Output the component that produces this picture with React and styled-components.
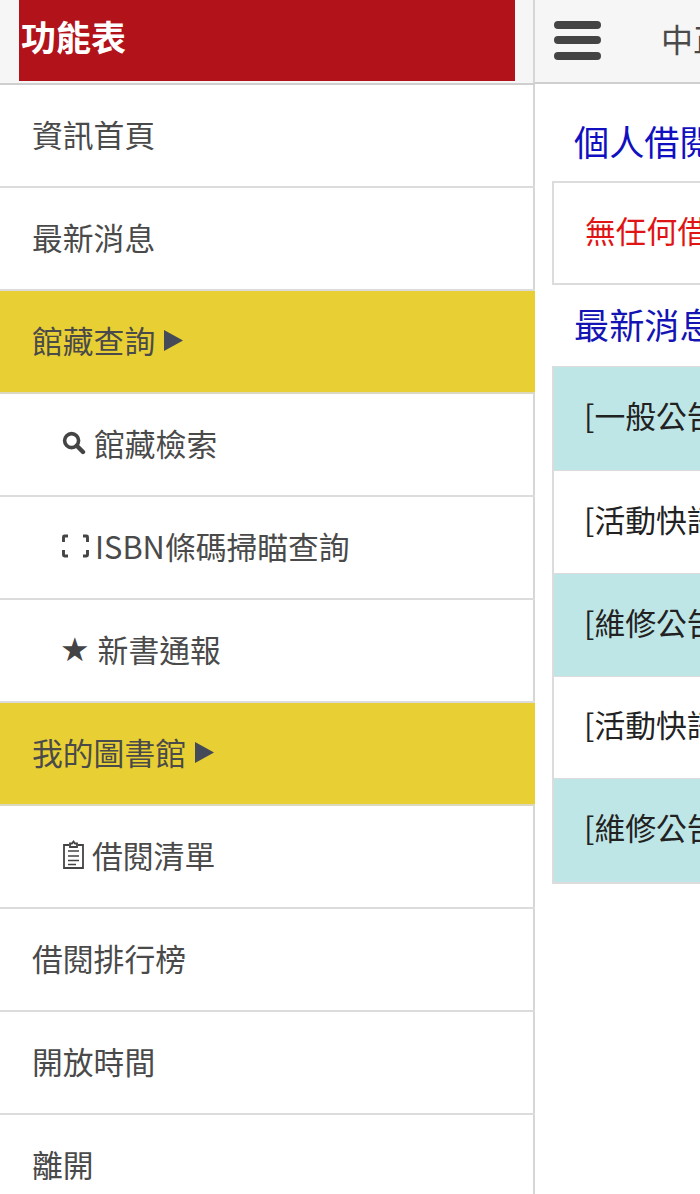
import React from "react";
import styled, { createGlobalStyle } from "styled-components";

const Global = createGlobalStyle`
  html, body { margin: 0; padding: 0; background: #fff; }
  * { box-sizing: border-box; }
`;

const FONT = `"Noto Sans CJK TC", "Noto Sans", "Liberation Sans", sans-serif`;

const Viewport = styled.div`
  display: flex;
  width: 700px;
  height: 1194px;
  overflow: hidden;
  font-family: ${FONT};
  background: #fff;
`;

const Sidebar = styled.nav`
  flex: 0 0 535px;
  height: 1194px;
  overflow: hidden;
  background: #fff;
`;

const SideHeader = styled.header`
  height: 85px;
  padding-left: 19px;
  background: #f6f6f6;
  border-bottom: 2px solid #cfcfcf;
  box-shadow: inset -2px 0 0 #d6d6d6;
`;

const SideTitle = styled.h1`
  display: flex;
  align-items: center;
  width: 496px;
  height: 81px;
  margin: 0;
  padding-left: 2px;
  padding-bottom: 10px;
  background: #b2121a;
  color: #fff;
  font-size: 35px;
  font-weight: 700;
  line-height: 1;
`;

const Row = styled.a`
  display: flex;
  align-items: center;
  gap: ${(p) => p.$gap ?? 7}px;
  height: 103px;
  padding-left: ${(p) => (p.$sub ? 62 : 32)}px;
  padding-bottom: 3px;
  border-bottom: 2px solid ${(p) => (p.$active ? "#dcd8c0" : "#dcdcdc")};
  background: ${(p) => (p.$active ? "#e8cf33" : "#fff")};
  box-shadow: ${(p) => (p.$active ? "none" : "inset -2px 0 0 #d6d6d6")};
  color: #4a4a4a;
  font-size: 30.8px;
  line-height: 1;
  white-space: nowrap;
`;

const StarGlyph = styled.span`
  margin-left: -2px;
  font-family: "DejaVu Sans", sans-serif;
  font-size: 33px;
  color: #444;
`;

const Main = styled.main`
  flex: 0 0 600px;
  height: 1194px;
`;

const TopBar = styled.header`
  display: flex;
  align-items: center;
  gap: 60px;
  height: 84px;
  padding: 0 0 2px 19px;
  background: #f6f6f6;
  border-bottom: 2px solid #cfcfcf;
`;

const Burger = styled.button`
  display: flex;
  flex-direction: column;
  gap: 7.5px;
  width: 47px;
  padding: 0;
  border: 0;
  background: none;
`;

const BurgerBar = styled.span`
  display: block;
  height: 8px;
  border-radius: 4px;
  background: #444;
`;

const TopTitle = styled.span`
  color: #4a4a4a;
  font-size: 32px;
  line-height: 1;
  white-space: nowrap;
  padding-bottom: 4px;
`;

const Content = styled.section`
  padding: 0 0 0 17px;
`;

const SectionTitle = styled.h2`
  height: ${(p) => p.$h}px;
  margin: 0;
  padding-left: 22px;
  padding-top: ${(p) => p.$top}px;
  color: ${(p) => (p.$news ? "#1414b4" : "#1010c0")};
  font-size: 35.2px;
  font-weight: 400;
  line-height: 1.2;
  white-space: nowrap;
`;

const Notice = styled.div`
  display: flex;
  align-items: center;
  height: 104px;
  padding: 0 0 6px 31px;
  border: 2px solid #dcdcdc;
  color: #e01414;
  font-size: 30.8px;
  line-height: 1;
  white-space: nowrap;
`;

const List = styled.ul`
  margin: 0;
  padding: 0;
  list-style: none;
  border: 2px solid #dcdcdc;
  border-width: 1px 2px;
`;

const Item = styled.li`
  display: flex;
  align-items: center;
  height: ${(p) => p.$h}px;
  padding: 0 0 6px 30px;
  background: ${(p) => (p.$tint ? "#bfe6e6" : "#fff")};
  border-bottom: 1px solid #dcdcdc;
  color: #222;
  font-size: 30.8px;
  line-height: 1;
  white-space: nowrap;
`;

const SearchIcon = () => (
  <svg width="24" height="24" viewBox="0 0 24 24" fill="none" stroke="#444" style={{ marginRight: 1 }}>
    <circle cx="9.6" cy="9.6" r="7" strokeWidth="3.6" />
    <path d="M14.8 14.8 L21 21" strokeWidth="4.4" strokeLinecap="round" />
  </svg>
);

const ScanIcon = () => (
  <svg width="27" height="24" viewBox="0 0 27 24" fill="none" stroke="#444" strokeWidth="2.9" strokeLinejoin="round" style={{ marginRight: -1 }}>
    <path d="M6 2 H2.5 Q1.5 2 1.5 3 V8 M1.5 16 V21 Q1.5 22 2.5 22 H6 M21 2 H24.5 Q25.5 2 25.5 3 V8 M25.5 16 V21 Q25.5 22 24.5 22 H21" />
  </svg>
);

const ClipIcon = () => (
  <svg width="24" height="30" viewBox="0 0 24 30" fill="none" stroke="#444" strokeWidth="1.8" style={{ marginRight: -1 }}>
    <path d="M7 5 H2 V28 H21 V5 H16" />
    <path d="M8 6 V3.5 H10 L11.5 1.5 L13 3.5 H15 V7 H8 Z" />
    <path d="M6 11 H17 M6 16 H17 M6 20.5 H17 M6 24.5 H14" strokeWidth="1.5" />
  </svg>
);

const Arrow = () => (
  <svg width="21" height="23" viewBox="0 0 21 23" style={{ marginLeft: 1 }}>
    <path d="M1 1 L20 11.5 L1 22 Z" fill="#444a58" />
  </svg>
);

export default function App() {
  return (
    <Viewport>
      <Global />
      <Sidebar>
        <SideHeader>
          <SideTitle>功能表</SideTitle>
        </SideHeader>
        <Row>資訊首頁</Row>
        <Row>最新消息</Row>
        <Row $active>館藏查詢<Arrow /></Row>
        <Row $sub><SearchIcon />館藏檢索</Row>
        <Row $sub><ScanIcon />ISBN條碼掃瞄查詢</Row>
        <Row $sub $gap={8}><StarGlyph>★</StarGlyph>新書通報</Row>
        <Row $active>我的圖書館<Arrow /></Row>
        <Row $sub><ClipIcon />借閱清單</Row>
        <Row>借閱排行榜</Row>
        <Row>開放時間</Row>
        <Row>離開</Row>
      </Sidebar>
      <Main>
        <TopBar>
          <Burger aria-label="menu">
            <BurgerBar />
            <BurgerBar />
            <BurgerBar />
          </Burger>
          <TopTitle>中正大學圖書館</TopTitle>
        </TopBar>
        <Content>
          <SectionTitle $h={97} $top={36}>個人借閱資訊</SectionTitle>
          <Notice>無任何借閱資料</Notice>
          <SectionTitle $h={81} $top={18} $news>最新消息</SectionTitle>
          <List>
            <Item $tint $h={104}>[一般公告] 圖書館公告</Item>
            <Item $h={103}>[活動快訊] 圖書館活動</Item>
            <Item $tint $h={103}>[維修公告] 系統維修</Item>
            <Item $h={102}>[活動快訊] 圖書館活動</Item>
            <Item $tint $h={104}>[維修公告] 系統維修</Item>
          </List>
        </Content>
      </Main>
    </Viewport>
  );
}
